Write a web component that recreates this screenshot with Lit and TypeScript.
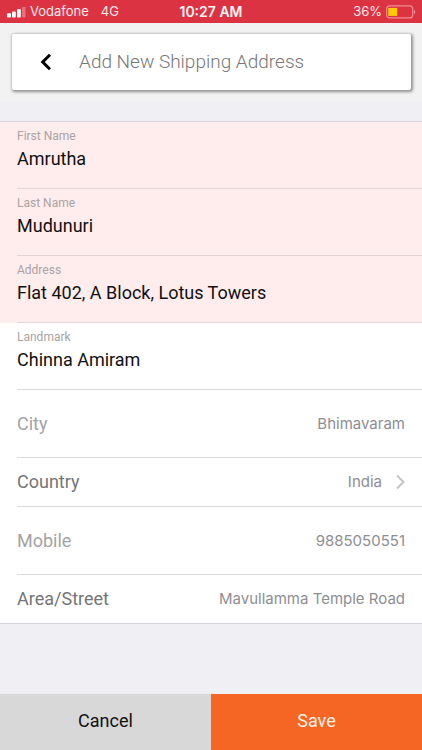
import { LitElement, html, css, nothing } from "lit";
import { customElement, property } from "lit/decorators.js";

@customElement("status-bar")
class StatusBar extends LitElement {
  static styles = css`
    :host {
      display: grid;
      grid-template-columns: 1fr auto 1fr;
      align-items: center;
      height: 23px;
      padding: 0 6px;
      background: #dc3342;
      color: #fde9ea;
      font: 13px/23px Inter, "Liberation Sans", sans-serif;
    }
    .side {
      display: flex;
      align-items: center;
      gap: 4px;
    }
    .network {
      margin-left: 8px;
    }
    .time {
      font-size: 14px;
      font-weight: 600;
      color: #fff4f4;
    }
    .end {
      justify-content: flex-end;
    }
    svg {
      display: block;
    }
  `;

  render() {
    return html`
      <div class="side">
        <svg width="20" height="12" viewBox="0 0 20 12" aria-hidden="true">
          <rect x="1" y="7.200" width="4" height="4.300" rx="1" fill="#fff" />
          <rect x="6" y="5.500" width="3.800" height="6" rx="1" fill="#fff" />
          <rect x="11" y="3" width="3.800" height="8.500" rx="1" fill="#fff" />
          <rect x="16" y="0.800" width="3.500" height="10.700" rx="1" fill="#fff" opacity=".3" />
        </svg>
        <span>Vodafone</span>
        <span class="network">4G</span>
      </div>
      <span class="time">10:27 AM</span>
      <div class="side end">
        <span>36%</span>
        <svg width="30" height="14" viewBox="0 0 30 14" aria-hidden="true">
          <rect x="0.7" y="0.9" width="26" height="12" rx="3" fill="none" stroke="#f08d95" stroke-width="1.2" />
          <rect x="2.3" y="2.9" width="9" height="8" fill="#ffcc00" />
          <path d="M28 5c1.6.5 1.6 3.500 0 4z" fill="#f2a0a7" />
        </svg>
      </div>
    `;
  }
}

@customElement("form-row")
class FormRow extends LitElement {
  @property() label = "";
  @property() value = "";
  @property() kind: "stacked" | "tall" | "short" | "link" = "stacked";
  @property({ type: Boolean }) invalid = false;
  @property({ type: Boolean }) last = false;

  static styles = css`
    :host {
      display: block;
      background: #fff;
    }
    :host([invalid]) {
      background: #ffecec;
    }
    .row {
      box-sizing: border-box;
      display: flex;
      align-items: center;
      gap: 16px;
      margin-left: 17px;
      padding-right: 17px;
      border-bottom: 1px solid #dcdade;
    }
    :host([last]) .row {
      margin-left: 0;
      padding-left: 17px;
      border-color: #d5d4da;
    }
    :host([invalid]) .row {
      border-color: #e4d4d6;
    }
    label,
    .label {
      flex: none;
      color: #757575;
      font: 18px/24px Roboto, "Liberation Sans", sans-serif;
    }
    .tall label {
      color: #a3a3a3;
    }
    input,
    button {
      box-sizing: border-box;
      flex: 1;
      min-width: 0;
      margin: 0;
      padding: 0;
      border: 0;
      outline: 0;
      background: none;
      color: #8e8e93;
      font: 15px/24px Inter, "Liberation Sans", sans-serif;
      text-align: right;
    }
    .stacked {
      flex-direction: column;
      align-items: stretch;
      gap: 3px;
      min-height: 67px;
      padding-top: 6px;
    }
    .stacked label {
      color: #aaa3a4;
      font-size: 12px;
      line-height: 16px;
    }
    .stacked input {
      flex: none;
      height: 24px;
      color: #111;
      font: 18px/24px Roboto, "Liberation Sans", sans-serif;
      text-align: left;
    }
    .tall {
      min-height: 68px;
    }
    .short,
    .link {
      min-height: 49px;
    }
    button {
      display: flex;
      align-items: center;
      justify-content: flex-end;
      gap: 14px;
      cursor: pointer;
    }
  `;

  render() {
    return html`
      <div class="row ${this.kind}">
        ${this.kind === "link"
          ? html`
              <span class="label" id="name">${this.label}</span>
              <button type="button" aria-labelledby="name value">
                <span id="value">${this.value}</span>
                <svg width="9" height="16" viewBox="0 0 9 16" aria-hidden="true">
                  <path d="M1 1.500 7.500 8 1 14.500" fill="none" stroke="#c4c4c8" stroke-width="2" />
                </svg>
              </button>
            `
          : html`
              <label for="field">${this.label}</label>
              <input
                id="field"
                type="text"
                .value=${this.value}
                aria-invalid=${this.invalid ? "true" : nothing}
              />
            `}
      </div>
    `;
  }
}

@customElement("app-root")
class AppRoot extends LitElement {
  static styles = css`
    :host {
      display: flex;
      flex-direction: column;
      min-height: 100vh;
      background: #efeff4;
      font-family: Roboto, "Liberation Sans", sans-serif;
    }
    header {
      padding: 11px 11px 11px 12px;
      background: #f2f2f2;
    }
    .card {
      display: flex;
      align-items: center;
      gap: 22px;
      height: 56px;
      padding-left: 22px;
      border-radius: 2px;
      background: #fff;
      box-shadow: 1px 1px 3px 1px rgba(0, 0, 0, 0.4);
    }
    .back {
      display: grid;
      place-items: center;
      width: 23px;
      height: 32px;
      padding: 0;
      border: 0;
      background: none;
      cursor: pointer;
    }
    h1 {
      margin: 0;
      color: #777;
      font-size: 19px;
      font-weight: 300;
      line-height: 24px;
    }
    form {
      display: flex;
      flex: 1;
      flex-direction: column;
    }
    .fields {
      margin-top: 20px;
      border-top: 1px solid #d9d7dc;
    }
    .actions {
      display: grid;
      grid-template-columns: 1fr 1fr;
      margin-top: auto;
    }
    .action {
      height: 56px;
      padding: 0 0 2px;
      border: 0;
      background: #d8d8d8;
      color: #111;
      font: 18px/24px Roboto, "Liberation Sans", sans-serif;
      cursor: pointer;
    }
    .save {
      background: #f56625;
      color: #fff0e6;
    }
  `;

  render() {
    return html`
      <status-bar></status-bar>
      <header>
        <div class="card">
          <button class="back" type="button" aria-label="Back">
            <svg width="12" height="18" viewBox="0 0 12 18" aria-hidden="true">
              <path d="M10 1.700 2.700 9 10 16.300" fill="none" stroke="#000" stroke-width="3" />
            </svg>
          </button>
          <h1>Add New Shipping Address</h1>
        </div>
      </header>
      <form @submit=${(e: Event) => e.preventDefault()}>
        <div class="fields">
          <form-row label="First Name" value="Amrutha" invalid></form-row>
          <form-row label="Last Name" value="Mudunuri" invalid></form-row>
          <form-row label="Address" value="Flat 402, A Block, Lotus Towers" invalid></form-row>
          <form-row label="Landmark" value="Chinna Amiram"></form-row>
          <form-row kind="tall" label="City" value="Bhimavaram"></form-row>
          <form-row kind="link" label="Country" value="India"></form-row>
          <form-row kind="tall" label="Mobile" value="9885050551"></form-row>
          <form-row kind="short" label="Area/Street" value="Mavullamma Temple Road" last></form-row>
        </div>
        <div class="actions">
          <button class="action" type="button">Cancel</button>
          <button class="action save" type="submit">Save</button>
        </div>
      </form>
    `;
  }
}
